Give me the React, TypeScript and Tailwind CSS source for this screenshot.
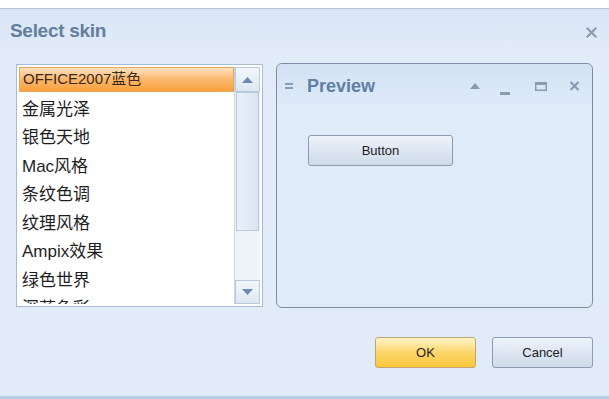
import React, { useState } from 'react';

const SKINS = [
  'OFFICE2007蓝色',
  '金属光泽',
  '银色天地',
  'Mac风格',
  '条纹色调',
  '纹理风格',
  'Ampix效果',
  '绿色世界',
  '深蓝色彩',
];

const font = { fontFamily: '"Liberation Sans", "Noto Sans CJK SC", sans-serif' };

export default function App() {
  const [selected, setSelected] = useState(0);

  return (
    <div className="w-[609px] h-[399px] bg-white overflow-hidden" style={font}>
      <div className="h-[8px] bg-white" />
      {/* Dialog */}
      <div className="h-[391px] flex flex-col border-t border-[#b9c4d2] bg-[#e2ecf9] border-b-[3px] border-b-[#b7cde8]">
        {/* Title bar */}
        <div className="h-[45px] flex items-center justify-between pl-[10px] pr-[12px] bg-gradient-to-b from-[#d8e5f5] to-[#e2ecf9]">
          <span className="text-[19px] font-bold text-[#647f9c] tracking-[-0.3px]">Select skin</span>
          <svg width="11" height="11" viewBox="0 0 11 11" className="mt-[2px]">
            <path d="M1.5 1.5 L9.5 9.5 M9.5 1.5 L1.5 9.5" stroke="#8b9bb0" strokeWidth="2.2" strokeLinecap="square" />
          </svg>
        </div>

        {/* Content */}
        <div className="flex gap-[13px] pl-[16px] pr-[16px] mt-[10px]">
          {/* List box */}
          <div className="w-[247px] h-[243px] flex border border-[#a9bbd1] bg-white p-[2px]">
            <div className="flex-1 overflow-hidden flex flex-col">
              {SKINS.map((s, i) => (
                <div
                  key={s}
                  onClick={() => setSelected(i)}
                  className={
                    i === selected
                      ? 'h-[25px] shrink-0 mb-[3px] flex items-center pl-[3px] text-[15px] text-[#3a2a1a] border border-[#e8a45a] bg-gradient-to-b from-[#fde2c0] via-[#fbb76a] to-[#f9a13c]'
                      : 'h-[28.5px] shrink-0 flex items-center pl-[3px] text-[17px] text-[#1e1e1e]'
                  }
                >
                  {s}
                </div>
              ))}
            </div>
            {/* Scrollbar */}
            <div className="w-[26px] flex flex-col border-l border-[#c8d6e6] bg-[#eef3fa]">
              <div className="h-[25px] flex items-center justify-center border border-[#b9c9dc] bg-gradient-to-b from-[#f3f7fc] to-[#dde7f3]">
                <svg width="11" height="6" viewBox="0 0 11 6"><path d="M0 6 L5.5 0 L11 6 Z" fill="#6a8ab0" /></svg>
              </div>
              <div className="h-[139px] mx-[1px] border border-[#b9c9dc] bg-gradient-to-r from-[#e9f0f8] to-[#dbe5f2]" />
              <div className="flex-1" />
              <div className="h-[24px] flex items-center justify-center border border-[#b9c9dc] bg-gradient-to-b from-[#f3f7fc] to-[#dde7f3]">
                <svg width="11" height="6" viewBox="0 0 11 6"><path d="M0 0 L5.5 6 L11 0 Z" fill="#6a8ab0" /></svg>
              </div>
            </div>
          </div>

          {/* Preview panel */}
          <div className="w-[317px] h-[245px] -mt-[1px] rounded-[6px] border-[1.5px] border-[#7b8ca3] bg-[#dfebf9] flex flex-col">
            <div className="h-[44px] flex items-center pl-[8px] pr-[12px] rounded-t-[6px] bg-gradient-to-b from-[#d3e1f3] to-[#dfebf9]">
              <svg width="8" height="6" viewBox="0 0 8 6" className="mr-[14px]">
                <path d="M0 1 H8 M0 5 H8" stroke="#6e86a3" strokeWidth="1.6" />
              </svg>
              <span className="text-[18px] font-bold text-[#5f7fa5]">Preview</span>
              <div className="flex-1" />
              <svg width="10" height="6" viewBox="0 0 10 6" className="mr-[20px]"><path d="M0 6 L5 0 L10 6 Z" fill="#8a9ab0" /></svg>
              <svg width="10" height="10" viewBox="0 0 10 10" className="mr-[25px] mt-[8px]"><rect x="0" y="7" width="10" height="3" fill="#8a9ab0" /></svg>
              <svg width="12" height="9" viewBox="0 0 12 9" className="mr-[22px]">
                <rect x="0.75" y="0.75" width="10.5" height="7.5" fill="none" stroke="#8a9ab0" strokeWidth="1.5" />
                <rect x="0" y="0" width="12" height="3" fill="#8a9ab0" />
              </svg>
              <svg width="11" height="10" viewBox="0 0 11 10">
                <path d="M1.5 1 L9.5 9 M9.5 1 L1.5 9" stroke="#8a9ab0" strokeWidth="2.2" />
              </svg>
            </div>
            <div className="pl-[31px] pt-[27px]">
              <button className="w-[145px] h-[31px] rounded-[3px] border border-[#8a9bb2] bg-gradient-to-b from-[#eef3fa] via-[#dde6f2] to-[#cfdbe9] text-[13px] text-[#222]">
                Button
              </button>
            </div>
          </div>
        </div>

        {/* Footer buttons */}
        <div className="flex justify-end gap-[16px] pr-[16px] mt-[29px]">
          <button className="w-[101px] h-[31px] rounded-[3px] border border-[#c2a574] bg-gradient-to-b from-[#fff3c4] via-[#fdd66a] to-[#fbc838] text-[13px] text-[#222]">
            OK
          </button>
          <button className="w-[101px] h-[31px] rounded-[3px] border border-[#8a9bb2] bg-gradient-to-b from-[#eef3fa] via-[#dde6f2] to-[#cfdbe9] text-[13px] text-[#222]">
            Cancel
          </button>
        </div>
      </div>
    </div>
  );
}
